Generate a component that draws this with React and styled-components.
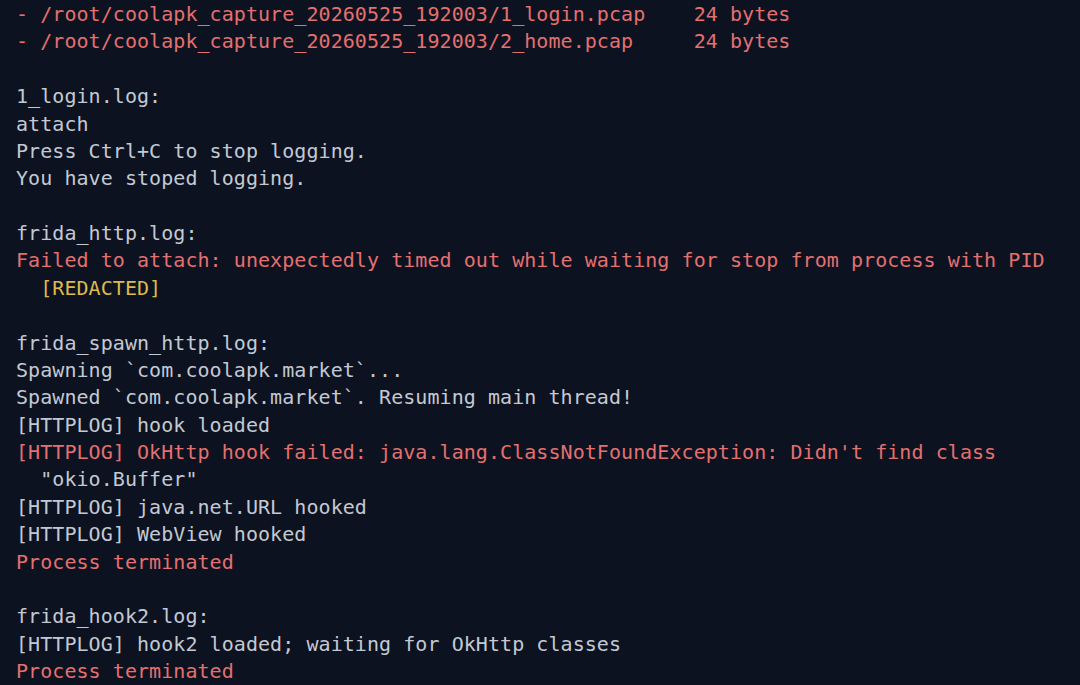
import React from 'react';
import styled, { createGlobalStyle } from 'styled-components';

const GlobalStyle = createGlobalStyle`
  html, body {
    margin: 0;
    padding: 0;
    background: #0d1220;
  }
`;

const Screen = styled.div`
  width: 1080px;
  height: 685px;
  overflow: hidden;
  background: #0d1220;
  padding: 1px 0 0 16px;
  box-sizing: border-box;
  font-family: 'DejaVu Sans Mono', 'Liberation Mono', monospace;
  font-size: 20px;
  letter-spacing: 0.06px;
  line-height: 27.375px;
`;

const colors = {
  plain: '#c3c9d3',
  error: '#e4706f',
  warn: '#dcbb4c',
};

const Line = styled.div`
  white-space: pre;
  height: 27.375px;
  color: ${(p) => colors[p.$tone || 'plain']};
`;

const lines = [
  ['error', '- /root/coolapk_capture_20260525_192003/1_login.pcap    24 bytes'],
  ['error', '- /root/coolapk_capture_20260525_192003/2_home.pcap     24 bytes'],
  ['plain', ''],
  ['plain', '1_login.log:'],
  ['plain', 'attach'],
  ['plain', 'Press Ctrl+C to stop logging.'],
  ['plain', 'You have stoped logging.'],
  ['plain', ''],
  ['plain', 'frida_http.log:'],
  ['error', 'Failed to attach: unexpectedly timed out while waiting for stop from process with PID'],
  ['warn', '  [REDACTED]'],
  ['plain', ''],
  ['plain', 'frida_spawn_http.log:'],
  ['plain', 'Spawning `com.coolapk.market`...'],
  ['plain', 'Spawned `com.coolapk.market`. Resuming main thread!'],
  ['plain', '[HTTPLOG] hook loaded'],
  ['error', "[HTTPLOG] OkHttp hook failed: java.lang.ClassNotFoundException: Didn't find class"],
  ['plain', '  "okio.Buffer"'],
  ['plain', '[HTTPLOG] java.net.URL hooked'],
  ['plain', '[HTTPLOG] WebView hooked'],
  ['error', 'Process terminated'],
  ['plain', ''],
  ['plain', 'frida_hook2.log:'],
  ['plain', '[HTTPLOG] hook2 loaded; waiting for OkHttp classes'],
  ['error', 'Process terminated'],
];

function App() {
  return (
    <>
      <GlobalStyle />
      <Screen>
        {lines.map(([tone, text], i) => (
          <Line key={i} $tone={tone}>
            {text}
          </Line>
        ))}
      </Screen>
    </>
  );
}

export default App;
